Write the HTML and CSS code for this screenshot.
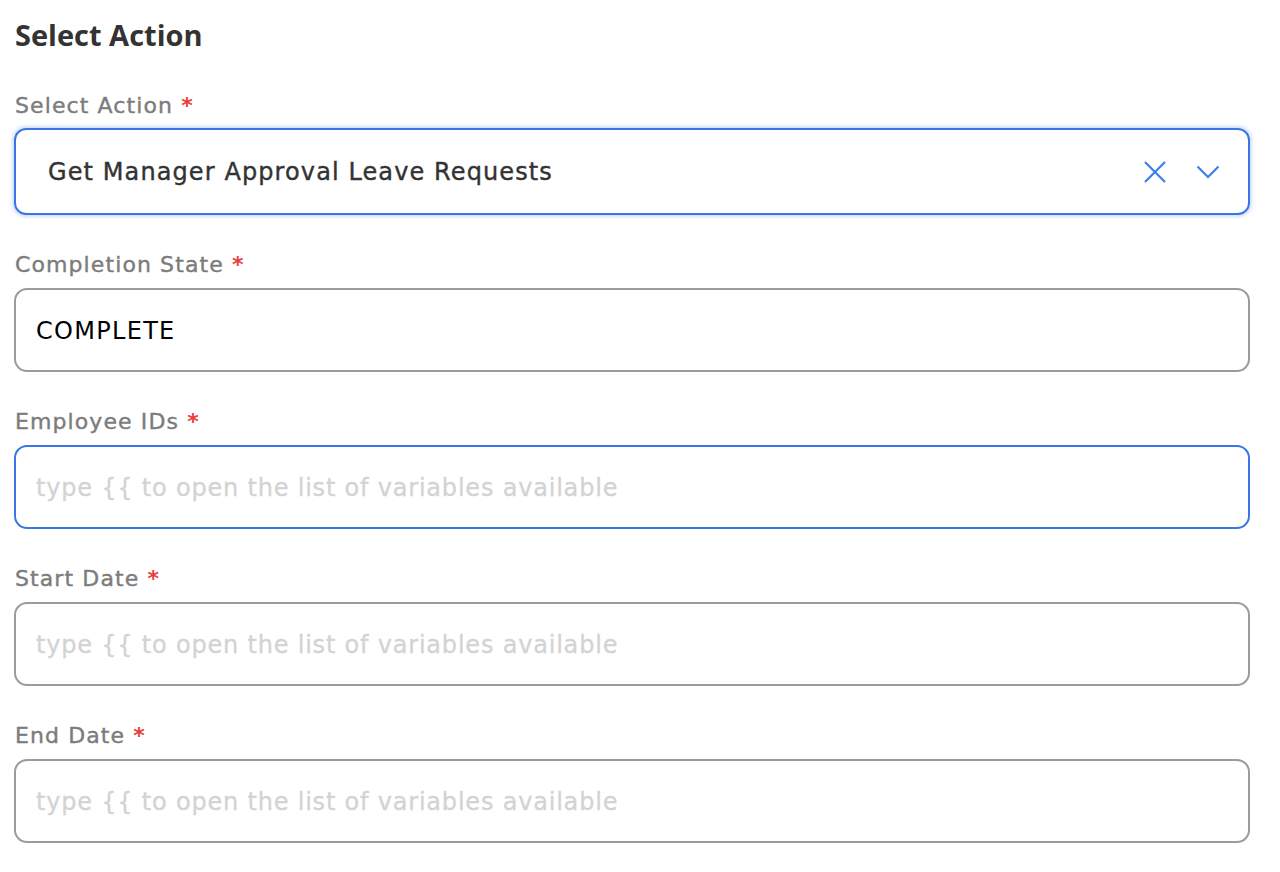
FILE: index.html
```html
<!DOCTYPE html>
<html lang="en">
<head>
<meta charset="utf-8">
<title>Select Action</title>
<link rel="stylesheet" href="styles.css">
</head>
<body>
<div class="panel">
  <h2 class="title">Select Action</h2>

  <div class="field field-first">
    <label class="label">Select Action <span class="req">*</span></label>
    <div class="select">
      <span class="select-value">Get Manager Approval Leave Requests</span>
      <span class="select-icons">
        <svg class="icon" width="22" height="22" viewBox="0 0 22 22" aria-hidden="true">
          <path d="M1 1 L21 21 M21 1 L1 21" stroke="#3f7ee8" stroke-width="2.2" fill="none"/>
        </svg>
        <svg class="icon" width="24" height="14" viewBox="0 0 24 14" aria-hidden="true">
          <path d="M1.5 1.5 L12 12 L22.5 1.5" stroke="#3f7ee8" stroke-width="2.2" fill="none"/>
        </svg>
      </span>
    </div>
  </div>

  <div class="field">
    <label class="label">Completion State <span class="req">*</span></label>
    <div class="input"><span class="value">COMPLETE</span></div>
  </div>

  <div class="field">
    <label class="label">Employee IDs <span class="req">*</span></label>
    <div class="input input-focus"><span class="placeholder">type {{ to open the list of variables available</span></div>
  </div>

  <div class="field">
    <label class="label">Start Date <span class="req">*</span></label>
    <div class="input"><span class="placeholder">type {{ to open the list of variables available</span></div>
  </div>

  <div class="field">
    <label class="label">End Date <span class="req">*</span></label>
    <div class="input"><span class="placeholder">type {{ to open the list of variables available</span></div>
  </div>
</div>
</body>
</html>
```

FILE: styles.css
```css
html, body {
  margin: 0;
  padding: 0;
  background: #ffffff;
}

body {
  font-family: "DejaVu Sans", "Noto Sans", sans-serif;
}

.panel {
  padding: 15px 30px 0 14px;
  display: flex;
  flex-direction: column;
}

.title {
  margin: 0;
  height: 40px;
  line-height: 40px;
  font-family: "Open Sans", "DejaVu Sans", sans-serif;
  font-size: 29px;
  font-weight: 700;
  color: #333333;
  padding-left: 1px;
}

.field {
  display: flex;
  flex-direction: column;
  margin-top: 32px;
}

.field-first {
  margin-top: 33px;
}

.label {
  display: block;
  height: 30px;
  padding-top: 2px;
  line-height: 32px;
  font-size: 22px;
  letter-spacing: 1.1px;
  font-weight: 400;
  color: #7c7c7c;
  -webkit-text-stroke: 0.4px #7c7c7c;
  padding-left: 1px;
}

.req {
  color: #e8403c;
  -webkit-text-stroke: 0;
  font-weight: 700;
}

.select {
  margin-top: 8px;
  height: 87px;
  box-sizing: border-box;
  border: 2px solid #3a76e5;
  border-radius: 12px;
  box-shadow: 0 0 4px 1px rgba(58, 118, 229, 0.35);
  display: flex;
  align-items: center;
  padding: 1px 28px 0 32px;
}

.select-value {
  flex: 1;
  font-size: 24px;
  letter-spacing: 1.1px;
  color: #333333;
  -webkit-text-stroke: 0.4px #333333;
}

.select-icons {
  display: flex;
  align-items: center;
  gap: 30px;
  margin-top: -1px;
}

.icon {
  display: block;
}

.input {
  margin-top: 9px;
  height: 84px;
  box-sizing: border-box;
  border: 2px solid #9b9b9b;
  border-radius: 13px;
  display: flex;
  align-items: center;
  padding: 1px 20px 0;
}

.input-focus {
  border-color: #3a76e5;
}

.value {
  font-size: 24px;
  letter-spacing: 1.3px;
  color: #000000;
}

.placeholder {
  font-size: 24px;
  letter-spacing: 0.8px;
  color: #d3d3d3;
  -webkit-text-stroke: 0.3px #d3d3d3;
}
```
